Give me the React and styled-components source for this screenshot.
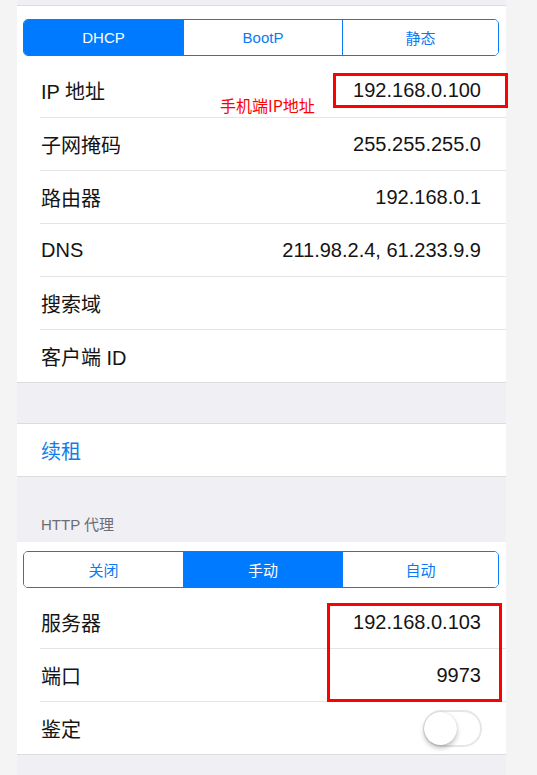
import React from 'react';
import styled, { createGlobalStyle } from 'styled-components';

// Global page styles

const GlobalStyle = createGlobalStyle`
    html, body {
        margin: 0;
        padding: 0;
        background: #f4f4f4;
    }
    body {
        font-family: "Liberation Sans", "Noto Sans CJK SC", sans-serif;
        color: #111;
    }
    `;

const Phone = styled.div`
    position: relative;
    width: 489px;
    height: 775px;
    margin-left: 17px;
    background: #efeff4;
    `;

const TopStrip = styled.div`
    height: 5px;
    border-bottom: 1px solid #dcdcdf;
    `;

const SegmentArea = styled.div`
    background: #fff;
    padding: ${props => props.pad || '13px 7px 8px 6px'};
    `;

const Segmented = styled.div`
    display: grid;
    grid-template-columns: 159px 159px 1fr;
    height: 37px;
    border: 1px solid #0a7af5;
    border-radius: 5px;
    overflow: hidden;
    box-sizing: border-box;
    `;

const Segment = styled.div`
    display: flex;
    align-items: center;
    justify-content: center;
    font-size: 15px;
    background: ${props => props.active ? '#007aff' : '#fff'};
    color: ${props => props.active ? '#fff' : '#0a7af5'};
    border-left: ${props => props.first ? 'none' : '1px solid #0a7af5'};
    `;

const Group = styled.div`
    position: relative;
    background: #fff;
    border-top: ${props => props.top ? '1px solid #dcdcdf' : 'none'};
    border-bottom: 1px solid #dcdcdf;
    `;

const Row = styled.div`
    position: relative;
    display: flex;
    align-items: center;
    justify-content: space-between;
    height: ${props => props.h || 53}px;
    margin-left: 23px;
    padding: 0 25px 0 1px;
    box-sizing: border-box;
    border-top: ${props => props.line ? '1px solid #e4e4e6' : 'none'};
    font-size: 20px;
    `;

const Label = styled.span`
    color: ${props => props.blue ? '#0f7de8' : '#141414'};
    `;

const Value = styled.span`
    color: #141414;
    `;

const Gap = styled.div`
    height: 40px;
    `;

const SectionHeader = styled.div`
    display: flex;
    align-items: flex-end;
    height: 65px;
    padding: 0 0 8px 24px;
    box-sizing: border-box;
    font-size: 15px;
    color: #6d6d72;
    `;

const Toggle = styled.div`
    position: relative;
    width: 59px;
    height: 37px;
    border-radius: 19px;
    border: 2px solid #e6e6e6;
    box-sizing: border-box;
    background: #fff;
    margin-right: -1px;
    `;

const Knob = styled.div`
    position: absolute;
    left: -1px;
    top: 0;
    width: 33px;
    height: 33px;
    border-radius: 50%;
    background: #fff;
    box-shadow: 0 3px 5px rgba(0, 0, 0, 0.25), 0 0 1px rgba(0, 0, 0, 0.2);
    `;

// Red annotations drawn over the screenshot

const RedBox = styled.div`
    position: absolute;
    border: 3px solid #ff0000;
    box-sizing: border-box;
    `;

const RedNote = styled.span`
    position: absolute;
    color: #ff0000;
    font-size: 16px;
    font-family: "Noto Sans CJK SC", sans-serif;
    white-space: nowrap;
    `;

const dhcpRows = [
    ['子网掩码', '255.255.255.0'],
    ['路由器', '192.168.0.1'],
    ['DNS', '211.98.2.4, 61.233.9.9'],
    ['搜索域', ''],
    ['客户端 ID', ''],
];

class App extends React.Component {
    render() {
        return (
            <>
            <GlobalStyle />
            <Phone>
                <TopStrip />
                <Group>
                    <SegmentArea>
                        <Segmented>
                            <Segment first active>DHCP</Segment>
                            <Segment>BootP</Segment>
                            <Segment>静态</Segment>
                        </Segmented>
                    </SegmentArea>
                    <Row>
                        <Label>IP 地址</Label>
                        <Value>192.168.0.100</Value>
                        <RedNote style={{ left: 180, top: 29 }}>手机端IP地址</RedNote>
                    </Row>
                    {dhcpRows.map(([label, value]) => (
                        <Row line key={label}>
                            <Label>{label}</Label>
                            <Value>{value}</Value>
                        </Row>
                    ))}
                    <RedBox style={{ left: 316, top: 67, width: 175, height: 35 }} />
                </Group>
                <Gap />
                <Group top>
                    <Row h={52}>
                        <Label blue>续租</Label>
                    </Row>
                </Group>
                <SectionHeader>HTTP 代理</SectionHeader>
                <Group>
                    <SegmentArea pad="9px 7px 8px 6px">
                        <Segmented>
                            <Segment first>关闭</Segment>
                            <Segment active>手动</Segment>
                            <Segment>自动</Segment>
                        </Segmented>
                    </SegmentArea>
                    <Row h={52}>
                        <Label>服务器</Label>
                        <Value>192.168.0.103</Value>
                    </Row>
                    <Row line>
                        <Label>端口</Label>
                        <Value>9973</Value>
                    </Row>
                    <Row line>
                        <Label>鉴定</Label>
                        <Toggle><Knob /></Toggle>
                    </Row>
                    <RedBox style={{ left: 310, top: 61, width: 175, height: 99 }} />
                </Group>
            </Phone>
            </>
        );
    }
}

export default App;
